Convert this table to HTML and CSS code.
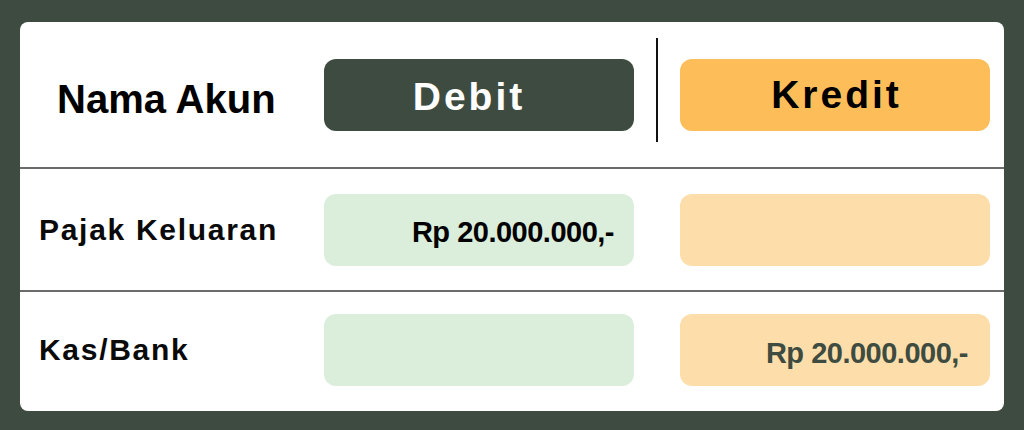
FILE: index.html
```html
<!DOCTYPE html>
<html lang="id">
<head>
<meta charset="utf-8">
<title>Jurnal</title>
<link rel="stylesheet" href="styles.css">
</head>
<body>
  <div class="card">
    <div class="row head">
      <div class="label label-head">Nama Akun</div>
      <div class="btn btn-debit">Debit</div>
      <div class="divider"></div>
      <div class="btn btn-kredit">Kredit</div>
    </div>
    <div class="row line">
      <div class="label">Pajak Keluaran</div>
      <div class="box box-debit"><span class="amt amt-dark">Rp 20.000.000,-</span></div>
      <div class="gap"></div>
      <div class="box box-kredit"></div>
    </div>
    <div class="row line last">
      <div class="label">Kas/Bank</div>
      <div class="box box-debit"></div>
      <div class="gap"></div>
      <div class="box box-kredit"><span class="amt amt-green">Rp 20.000.000,-</span></div>
    </div>
  </div>
</body>
</html>
```

FILE: styles.css
```css
* { box-sizing: border-box; }
html, body {
  margin: 0;
  padding: 0;
  background: #3e4b40;
  width: 1024px;
  height: 430px;
  overflow: hidden;
  font-family: "Liberation Sans", Arial, sans-serif;
}
.card {
  margin: 22px 0 0 20px;
  width: 984px;
  height: 389px;
  background: #ffffff;
  border-radius: 8px;
  overflow: hidden;
  display: flex;
  flex-direction: column;
}
.row {
  display: grid;
  grid-template-columns: 304px 310px 46px 310px 14px;
  align-items: center;
}
.head {
  height: 147px;
  border-bottom: 2px solid #6b6b6b;
}
.line {
  height: 123px;
  border-bottom: 2px solid #6b6b6b;
}
.line.last {
  border-bottom: none;
  flex: 1;
  height: auto;
  padding-bottom: 3px;
}
.label {
  padding-left: 19px;
  font-weight: 700;
  font-size: 30px;
  letter-spacing: 1.7px;
  color: #0a0a0a;
  white-space: nowrap;
}
.label-head {
  padding-left: 37px;
  padding-top: 9px;
  font-size: 40px;
  letter-spacing: 0;
  color: #000;
}
.btn {
  height: 72px;
  border-radius: 12px;
  display: flex;
  align-items: center;
  justify-content: center;
  font-weight: 700;
  font-size: 39px;
  letter-spacing: 3px;
}
.btn-debit {
  background: #3e4b40;
  color: #ffffff;
  padding-right: 20px;
  padding-top: 4px;
}
.btn-kredit {
  background: #fdbe5a;
  color: #000;
  padding-left: 3px;
}
.divider {
  justify-self: center;
  align-self: start;
  margin-top: 16px;
  width: 2px;
  height: 104px;
  background: #111;
}
.box {
  height: 72px;
  border-radius: 12px;
  display: flex;
  align-items: center;
  justify-content: flex-end;
  padding: 6px 20px 0 0;
}
.box-debit { background: #dbeddb; }
.box-kredit { background: #fddeab; padding-right: 22px; }
.amt {
  font-weight: 700;
  font-size: 29px;
  letter-spacing: -0.5px;
  white-space: nowrap;
}
.amt-dark { color: #000; }
.amt-green { color: #3e4b40; }
```
